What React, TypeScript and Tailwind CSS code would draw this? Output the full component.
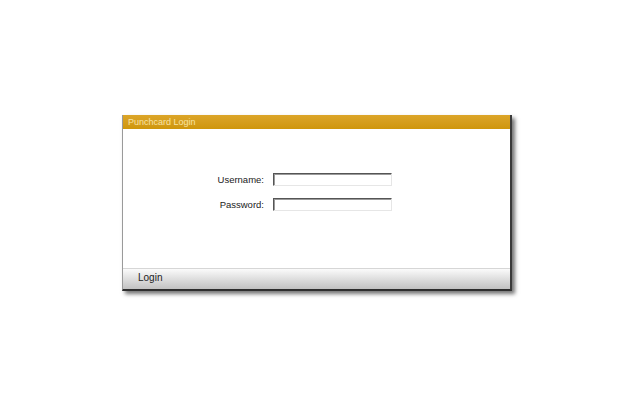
import { FC } from "react"

const Field: FC<{ label: string; type: string }> = ({ label, type }) => (
  <div className="flex items-center h-[13px]">
    <label className="w-[141px] text-right text-[9.5px] leading-none text-[#222]">
      {label}
    </label>
    <input
      type={type}
      className="ml-[9px] w-[119px] h-[13px] bg-white outline-none border border-t-[#555] border-l-[#555] border-b-[#e6e6e6] border-r-[#e6e6e6] shadow-[inset_1px_1px_0_#9a9a9a]"
    />
  </div>
)

const App: FC = () => {
  return (
    <div
      className="w-[640px] h-[409px] bg-white pt-[115px] pl-[122px]"
      style={{ fontFamily: '"Liberation Sans", Arial, sans-serif' }}
    >
      <div className="w-[390px] flex flex-col bg-white border-l border-l-[#9a9a9a] border-r-2 border-r-[#3a3a3a] border-b-2 border-b-[#2e2e2e] shadow-[3px_3px_4px_rgba(0,0,0,0.55)]">
        <div className="h-[14px] flex items-center pl-[5px] bg-gradient-to-b from-[#dca528] to-[#cf960a] text-[9px] leading-none text-[#f7e4a4]">
          Punchcard Login
        </div>
        <div className="h-[139px] flex flex-col gap-[12px] pt-[44px]">
          <Field label="Username:" type="text" />
          <Field label="Password:" type="password" />
        </div>
        <div className="h-[21px] flex items-center pl-[15px] pb-[2px] border-t border-t-[#d6d6d6] bg-gradient-to-b from-[#fbfbfb] to-[#c2c2c2] text-[10px] leading-none text-[#222]">
          Login
        </div>
      </div>
    </div>
  )
}

export default App
